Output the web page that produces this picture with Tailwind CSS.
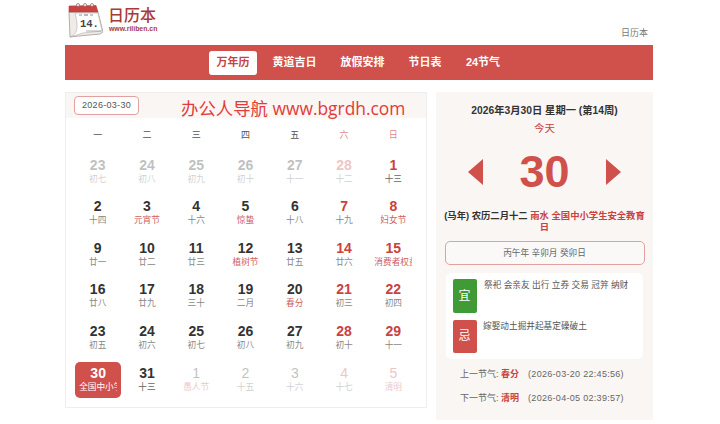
<!DOCTYPE html>
<html lang="zh-CN">
<head>
    <meta charset="UTF-8">
    <title>日历本</title>
    <script src="https://cdn.jsdelivr.net/npm/@tailwindcss/browser@4"></script>
</head>
<body class="bg-white font-['Liberation_Sans','Noto_Sans_CJK_SC',sans-serif] text-[#333]">
<div class="mx-auto w-[720px] h-[424px] overflow-hidden pl-[65px] pr-[67px]">
    <!-- header -->
    <header class="h-[45px] flex items-start">
        <svg class="mt-[3px]" width="38" height="36" viewBox="0 0 38 36">
            <path d="M4 9 L5 34 L14 33 L35 31 L38 29 L33 9 Z" fill="#efebe8" stroke="#a59a95" stroke-width="0.8"/>
            <path d="M4 9 L4 3 L31 2.5 L33 9 Z" fill="#c9423f" stroke="#b43c3a" stroke-width="0.6"/>
            <circle cx="13" cy="2" r="1.5" fill="#fff" stroke="#8b5a58" stroke-width="0.7"/>
            <circle cx="20" cy="2" r="1.5" fill="#fff" stroke="#8b5a58" stroke-width="0.7"/>
            <circle cx="27" cy="2" r="1.5" fill="#fff" stroke="#8b5a58" stroke-width="0.7"/>
            <path d="M5 34 C12 31 14 26 10 10 L33 10 L37 28 L18 30 C14 31 9 33 5 34 Z" fill="#fff" stroke="#b5aca8" stroke-width="0.6"/>
            <path d="M14 12 H17 M25 12 H28" stroke="#777" stroke-width="0.8"/>
            <path d="M19 12 H23" stroke="#999" stroke-width="1.4"/>
            <text x="15" y="24" font-size="10.5" font-family="Liberation Mono" fill="#444" font-weight="700">14.</text>
            <path d="M21 28 H36" stroke="#999" stroke-width="0.8"/>
        </svg>
        <div class="ml-[5px] mt-[6px] flex flex-col">
            <span class="text-[16px] leading-[20px] font-medium text-[#a93a3a]">日历本</span>
            <span class="text-[6.9px] leading-[7px] mt-[-1px] ml-[1px] font-bold text-[#a93a3a]">www.riliben.cn</span>
        </div>
        <span class="ml-auto mr-[5px] mt-[27px] whitespace-nowrap text-[9px] leading-[12px] text-[#777]">日历本</span>
    </header>

    <!-- nav -->
    <nav class="h-[35px] bg-[#d0504c] flex items-center pl-[144px] text-[11px] font-bold text-white">
        <a class="w-[48px] h-[24px] rounded-[3px] bg-white text-[#c9423f] flex items-center justify-center">万年历</a>
        <a class="ml-[15px] w-[45px] text-center">黄道吉日</a>
        <a class="ml-[23px] w-[45px] text-center">放假安排</a>
        <a class="ml-[23px] w-[34px] text-center">节日表</a>
        <a class="ml-[23px] w-[36px] text-center">24节气</a>
    </nav>

    <main class="mt-[12px] flex items-start">
        <!-- calendar -->
        <section class="w-[362px] h-[316px] border border-[#eeeeee] bg-white">
            <div class="h-[25px] bg-[#faf6f3] flex items-center">
                <div class="ml-[8px] w-[65px] h-[19px] border border-[#e3a0a0] rounded-[4px] bg-white text-[9px] tracking-[0.3px] text-[#555] flex items-center justify-center">2026-03-30</div>
                <span class="ml-[42px] mt-[5px] text-[17.4px] leading-[25px] whitespace-nowrap text-[#e23b3b] font-['Open_Sans','Noto_Sans_CJK_SC',sans-serif]">办公人导航 www.bgrdh.com</span>
            </div>
            <div class="grid grid-cols-7 w-[345px] ml-[7px] h-[34.5px] items-center text-center text-[9px] text-[#555]">
                <span>一</span><span>二</span><span>三</span><span>四</span><span>五</span><span class="text-[#d0504c]/70">六</span><span class="text-[#d0504c]/70">日</span>
            </div>
            <div class="grid grid-cols-7 w-[345px] ml-[7px] auto-rows-[41.66px] text-center text-[14px] leading-[16px] font-bold text-[#333]">
                <div class="flex flex-col items-center pt-[4px] opacity-30"><span>23</span><small class="w-[38px] overflow-hidden whitespace-nowrap text-[8.67px] leading-[12px] font-normal text-[#666]">初七</small></div>
                <div class="flex flex-col items-center pt-[4px] opacity-30"><span>24</span><small class="w-[38px] overflow-hidden whitespace-nowrap text-[8.67px] leading-[12px] font-normal text-[#666]">初八</small></div>
                <div class="flex flex-col items-center pt-[4px] opacity-30"><span>25</span><small class="w-[38px] overflow-hidden whitespace-nowrap text-[8.67px] leading-[12px] font-normal text-[#666]">初九</small></div>
                <div class="flex flex-col items-center pt-[4px] opacity-30"><span>26</span><small class="w-[38px] overflow-hidden whitespace-nowrap text-[8.67px] leading-[12px] font-normal text-[#666]">初十</small></div>
                <div class="flex flex-col items-center pt-[4px] opacity-30"><span>27</span><small class="w-[38px] overflow-hidden whitespace-nowrap text-[8.67px] leading-[12px] font-normal text-[#666]">十一</small></div>
                <div class="flex flex-col items-center pt-[4px] opacity-30 text-[#c9423f]"><span>28</span><small class="w-[38px] overflow-hidden whitespace-nowrap text-[8.67px] leading-[12px] font-normal text-[#666]">十二</small></div>
                <div class="flex flex-col items-center pt-[4px] text-[#c9423f]"><span>1</span><small class="w-[38px] overflow-hidden whitespace-nowrap text-[8.67px] leading-[12px] font-normal text-[#666]">十三</small></div>

                <div class="flex flex-col items-center pt-[4px]"><span>2</span><small class="w-[38px] overflow-hidden whitespace-nowrap text-[8.67px] leading-[12px] font-normal text-[#888]">十四</small></div>
                <div class="flex flex-col items-center pt-[4px]"><span>3</span><small class="w-[38px] overflow-hidden whitespace-nowrap text-[8.67px] leading-[12px] font-normal text-[#d0605c]">元宵节</small></div>
                <div class="flex flex-col items-center pt-[4px]"><span>4</span><small class="w-[38px] overflow-hidden whitespace-nowrap text-[8.67px] leading-[12px] font-normal text-[#888]">十六</small></div>
                <div class="flex flex-col items-center pt-[4px]"><span>5</span><small class="w-[38px] overflow-hidden whitespace-nowrap text-[8.67px] leading-[12px] font-normal text-[#d0605c]">惊蛰</small></div>
                <div class="flex flex-col items-center pt-[4px]"><span>6</span><small class="w-[38px] overflow-hidden whitespace-nowrap text-[8.67px] leading-[12px] font-normal text-[#888]">十八</small></div>
                <div class="flex flex-col items-center pt-[4px] text-[#c9423f]"><span>7</span><small class="w-[38px] overflow-hidden whitespace-nowrap text-[8.67px] leading-[12px] font-normal text-[#888]">十九</small></div>
                <div class="flex flex-col items-center pt-[4px] text-[#c9423f]"><span>8</span><small class="w-[38px] overflow-hidden whitespace-nowrap text-[8.67px] leading-[12px] font-normal text-[#d0605c]">妇女节</small></div>

                <div class="flex flex-col items-center pt-[4px]"><span>9</span><small class="w-[38px] overflow-hidden whitespace-nowrap text-[8.67px] leading-[12px] font-normal text-[#888]">廿一</small></div>
                <div class="flex flex-col items-center pt-[4px]"><span>10</span><small class="w-[38px] overflow-hidden whitespace-nowrap text-[8.67px] leading-[12px] font-normal text-[#888]">廿二</small></div>
                <div class="flex flex-col items-center pt-[4px]"><span>11</span><small class="w-[38px] overflow-hidden whitespace-nowrap text-[8.67px] leading-[12px] font-normal text-[#888]">廿三</small></div>
                <div class="flex flex-col items-center pt-[4px]"><span>12</span><small class="w-[38px] overflow-hidden whitespace-nowrap text-[8.67px] leading-[12px] font-normal text-[#d0605c]">植树节</small></div>
                <div class="flex flex-col items-center pt-[4px]"><span>13</span><small class="w-[38px] overflow-hidden whitespace-nowrap text-[8.67px] leading-[12px] font-normal text-[#888]">廿五</small></div>
                <div class="flex flex-col items-center pt-[4px] text-[#c9423f]"><span>14</span><small class="w-[38px] overflow-hidden whitespace-nowrap text-[8.67px] leading-[12px] font-normal text-[#888]">廿六</small></div>
                <div class="flex flex-col items-center pt-[4px] text-[#c9423f]"><span>15</span><small class="w-[38px] overflow-hidden whitespace-nowrap text-[8.67px] leading-[12px] font-normal text-[#d0605c]">消费者权益日</small></div>

                <div class="flex flex-col items-center pt-[4px]"><span>16</span><small class="w-[38px] overflow-hidden whitespace-nowrap text-[8.67px] leading-[12px] font-normal text-[#888]">廿八</small></div>
                <div class="flex flex-col items-center pt-[4px]"><span>17</span><small class="w-[38px] overflow-hidden whitespace-nowrap text-[8.67px] leading-[12px] font-normal text-[#888]">廿九</small></div>
                <div class="flex flex-col items-center pt-[4px]"><span>18</span><small class="w-[38px] overflow-hidden whitespace-nowrap text-[8.67px] leading-[12px] font-normal text-[#888]">三十</small></div>
                <div class="flex flex-col items-center pt-[4px]"><span>19</span><small class="w-[38px] overflow-hidden whitespace-nowrap text-[8.67px] leading-[12px] font-normal text-[#888]">二月</small></div>
                <div class="flex flex-col items-center pt-[4px]"><span>20</span><small class="w-[38px] overflow-hidden whitespace-nowrap text-[8.67px] leading-[12px] font-normal text-[#d0605c]">春分</small></div>
                <div class="flex flex-col items-center pt-[4px] text-[#c9423f]"><span>21</span><small class="w-[38px] overflow-hidden whitespace-nowrap text-[8.67px] leading-[12px] font-normal text-[#888]">初三</small></div>
                <div class="flex flex-col items-center pt-[4px] text-[#c9423f]"><span>22</span><small class="w-[38px] overflow-hidden whitespace-nowrap text-[8.67px] leading-[12px] font-normal text-[#888]">初四</small></div>

                <div class="flex flex-col items-center pt-[4px]"><span>23</span><small class="w-[38px] overflow-hidden whitespace-nowrap text-[8.67px] leading-[12px] font-normal text-[#888]">初五</small></div>
                <div class="flex flex-col items-center pt-[4px]"><span>24</span><small class="w-[38px] overflow-hidden whitespace-nowrap text-[8.67px] leading-[12px] font-normal text-[#888]">初六</small></div>
                <div class="flex flex-col items-center pt-[4px]"><span>25</span><small class="w-[38px] overflow-hidden whitespace-nowrap text-[8.67px] leading-[12px] font-normal text-[#888]">初七</small></div>
                <div class="flex flex-col items-center pt-[4px]"><span>26</span><small class="w-[38px] overflow-hidden whitespace-nowrap text-[8.67px] leading-[12px] font-normal text-[#888]">初八</small></div>
                <div class="flex flex-col items-center pt-[4px]"><span>27</span><small class="w-[38px] overflow-hidden whitespace-nowrap text-[8.67px] leading-[12px] font-normal text-[#888]">初九</small></div>
                <div class="flex flex-col items-center pt-[4px] text-[#c9423f]"><span>28</span><small class="w-[38px] overflow-hidden whitespace-nowrap text-[8.67px] leading-[12px] font-normal text-[#888]">初十</small></div>
                <div class="flex flex-col items-center pt-[4px] text-[#c9423f]"><span>29</span><small class="w-[38px] overflow-hidden whitespace-nowrap text-[8.67px] leading-[12px] font-normal text-[#888]">十一</small></div>

                <div class="flex flex-col items-center"><div class="w-[46px] h-[36px] mt-[1px] ml-[1px] rounded-[5px] bg-[#d0504c] text-white flex flex-col items-center pt-[3px]"><span>30</span><small class="w-[38px] overflow-hidden whitespace-nowrap text-[8.67px] leading-[12px] font-normal">全国中小学生安全教育日</small></div></div>
                <div class="flex flex-col items-center pt-[4px]"><span>31</span><small class="w-[38px] overflow-hidden whitespace-nowrap text-[8.67px] leading-[12px] font-normal text-[#666]">十三</small></div>
                <div class="flex flex-col items-center pt-[4px] opacity-30 font-normal"><span>1</span><small class="w-[38px] overflow-hidden whitespace-nowrap text-[8.67px] leading-[12px] font-normal text-[#c9423f]">愚人节</small></div>
                <div class="flex flex-col items-center pt-[4px] opacity-30 font-normal"><span>2</span><small class="w-[38px] overflow-hidden whitespace-nowrap text-[8.67px] leading-[12px] font-normal text-[#666]">十五</small></div>
                <div class="flex flex-col items-center pt-[4px] opacity-30 font-normal"><span>3</span><small class="w-[38px] overflow-hidden whitespace-nowrap text-[8.67px] leading-[12px] font-normal text-[#666]">十六</small></div>
                <div class="flex flex-col items-center pt-[4px] opacity-30 font-normal text-[#c9423f]"><span>4</span><small class="w-[38px] overflow-hidden whitespace-nowrap text-[8.67px] leading-[12px] font-normal text-[#666]">十七</small></div>
                <div class="flex flex-col items-center pt-[4px] opacity-30 font-normal text-[#c9423f]"><span>5</span><small class="w-[38px] overflow-hidden whitespace-nowrap text-[8.67px] leading-[12px] font-normal text-[#c9423f]">清明</small></div>
            </div>
        </section>

        <!-- day detail -->
        <aside class="ml-[9px] w-[217px] h-[328px] bg-[#f9f6f4] flex flex-col items-center text-center">
            <div class="mt-[12px] text-[10.3px] leading-[14px] font-bold text-[#333]">2026年3月30日 星期一 (第14周)</div>
            <div class="mt-[3px] text-[10.5px] leading-[14px] text-[#c9423f]">今天</div>
            <div class="mt-[6px] w-[153px] h-[62px] flex items-center justify-between text-[#d0504c]">
                <svg width="15" height="26" viewBox="0 0 15 26"><path d="M15 0 L0 13 L15 26 Z" fill="currentColor"/></svg>
                <span class="text-[45px] leading-[50px] font-bold">30</span>
                <svg width="15" height="26" viewBox="0 0 15 26"><path d="M0 0 L15 13 L0 26 Z" fill="currentColor"/></svg>
            </div>
            <div class="mt-[7.5px] w-[206px] text-[9.33px] leading-[11.5px] font-bold text-[#333]">(马年) 农历二月十二 <span class="text-[#c9423f]">雨水 全国中小学生安全教育日</span></div>
            <div class="mt-[7.6px] w-[200px] h-[24px] border border-[#e3a0a0] rounded-[5px] bg-white/40 text-[8.67px] text-[#666] flex items-center justify-center">丙午年 辛卯月 癸卯日</div>
            <div class="mt-[8px] self-start ml-[10px] w-[197px] h-[86.4px] bg-white rounded-[5px] text-left text-[8.67px] leading-[12px] text-[#555] flex flex-col gap-[6.4px] pl-[6.5px] pt-[6.4px]">
                <div class="flex h-[33.7px]">
                    <span class="w-[24px] h-[33.7px] rounded-[2px] bg-[#409a35] text-white text-[12px] flex items-center justify-center">宜</span>
                    <p class="ml-[7.5px]">祭祀 会亲友 出行 立券 交易 冠笄 纳财</p>
                </div>
                <div class="flex h-[33.7px]">
                    <span class="w-[24px] h-[33.7px] rounded-[2px] bg-[#d0504c] text-white text-[12px] flex items-center justify-center">忌</span>
                    <p class="ml-[6.5px]">嫁娶动土掘井起基定磉破土</p>
                </div>
            </div>
            <div class="mt-[8.3px] self-start ml-[24px] h-[12px] text-[9px] leading-[12px] text-[#666] whitespace-nowrap">上一节气: <b class="text-[#c9423f]">春分</b><span class="ml-[9px] tracking-[0.3px]">(2026-03-20 22:45:56)</span></div>
            <div class="mt-[12px] self-start ml-[24px] h-[12px] text-[9px] leading-[12px] text-[#666] whitespace-nowrap">下一节气: <b class="text-[#c9423f]">清明</b><span class="ml-[9px] tracking-[0.3px]">(2026-04-05 02:39:57)</span></div>
        </aside>
    </main>
</div>
</body>
</html>
